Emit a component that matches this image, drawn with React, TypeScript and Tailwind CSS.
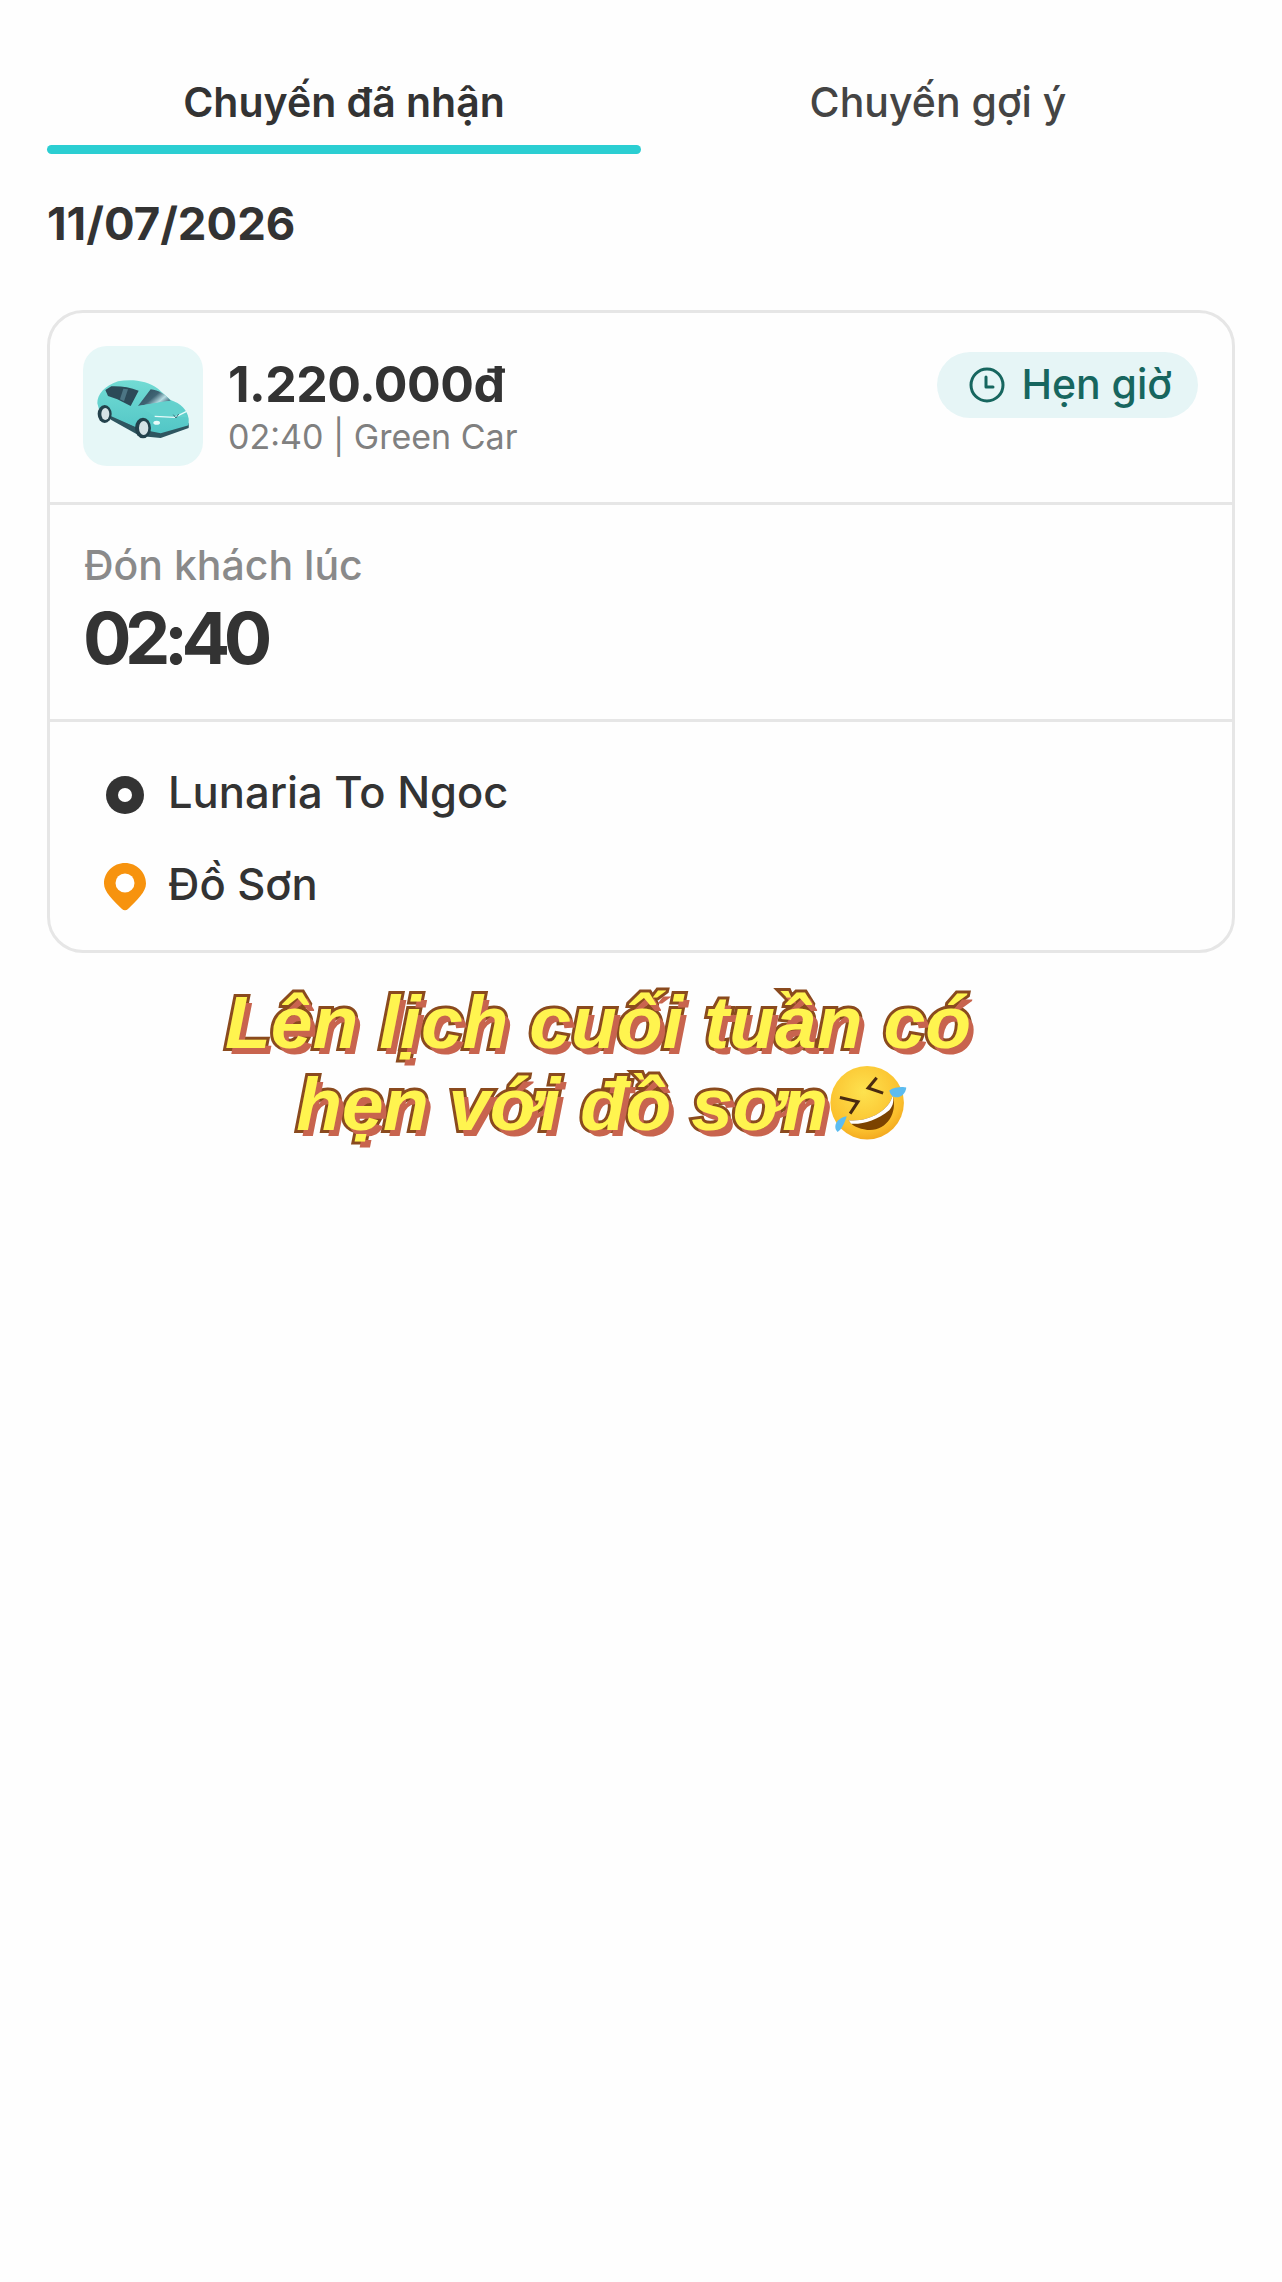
const font = "[font-family:Inter,'Noto_Sans',sans-serif]";

const CarIcon = () => (
  <svg viewBox="25 18 360 360" className="h-full w-full">
    <defs>
      <linearGradient id="carBody" x1="0" y1="0" x2="0" y2="1">
        <stop offset="0" stopColor="#72dbd4" />
        <stop offset="1" stopColor="#52c6c6" />
      </linearGradient>
      <linearGradient id="glass" x1="0" y1="0" x2="1" y2="0.6">
        <stop offset="0" stopColor="#2c4b5a" />
        <stop offset="0.55" stopColor="#3f6474" />
        <stop offset="0.8" stopColor="#b6dbe2" />
        <stop offset="1" stopColor="#4d7686" />
      </linearGradient>
    </defs>
    <path d="M78 216 L110 240 L196 288 L258 294 L342 264 L343 250 L258 276 L200 268 L110 226 Z" fill="#2e5660" />
    <path d="M68 190 C68 164 88 138 130 124 C170 116 220 122 250 146 L288 180 C318 190 338 210 342 236 L342 256 L258 280 L198 268 L108 228 L74 212 Z" fill="url(#carBody)" />
    <path d="M92 150 L110 139 C140 138 166 142 192 152 L168 198 L128 178 L100 168 Z" fill="#2c4a58" />
    <path d="M146 146 L160 148 L148 184 L136 178 Z" fill="#4c7584" />
    <path d="M190 198 L228 148 C252 150 272 164 288 182 C258 186 222 192 190 198 Z" fill="url(#glass)" />
    <path d="M190 198 L288 182 L340 232 L240 228 Z" fill="#62d1cd" />
    <ellipse cx="90" cy="222" rx="21" ry="27" fill="#23424c" />
    <ellipse cx="92" cy="222" rx="12" ry="18" fill="#d5e3e6" />
    <ellipse cx="205" cy="264" rx="24" ry="31" fill="#23424c" />
    <ellipse cx="207" cy="264" rx="14" ry="21" fill="#d5e3e6" />
    <path d="M240 229 L300 232 L336 214" fill="none" stroke="#e8fbfa" strokeWidth="4" />
    <path d="M296 224 L304 234 L312 222" fill="none" stroke="#35707a" strokeWidth="3" />
    <ellipse cx="246" cy="248" rx="10" ry="6" fill="#e8fbfa" />
  </svg>
);

const ClockIcon = () => (
  <svg viewBox="0 0 36 36" className="h-9 w-9 shrink-0" fill="none" stroke="#17665f" strokeWidth="3">
    <circle cx="18" cy="18" r="16" />
    <path d="M17 10 V20 H24" strokeLinecap="round" strokeLinejoin="round" />
  </svg>
);

const PinIcon = () => (
  <svg viewBox="0 0 42 48" className="mt-[3px] h-12 w-[42px]">
    <path d="M21 0 C32.6 0 42 9.2 42 20.5 C42 29 33 37 24 46 C22.4 47.6 19.6 47.6 18 46 C9 37 0 29 0 20.5 C0 9.2 9.4 0 21 0 Z" fill="#f7930e" />
    <circle cx="21" cy="20" r="9.5" fill="#ffffff" />
  </svg>
);

const LaughEmoji = () => (
  <svg viewBox="100 15 235 225" className="inline-block h-[77px] w-[80px] align-[-11px]">
    <defs>
      <radialGradient id="face" cx="0.45" cy="0.35" r="0.75">
        <stop offset="0" stopColor="#fde24f" />
        <stop offset="0.7" stopColor="#fbc02d" />
        <stop offset="1" stopColor="#ee9a17" />
      </radialGradient>
    </defs>
    <circle cx="215" cy="128" r="108" fill="url(#face)" />
    <path d="M160 180 C220 186 278 152 290 108 C306 160 270 214 215 208 C190 205 170 196 160 180 Z" fill="#7c4300" />
    <path d="M160 180 C220 186 278 152 290 108 C295 128 288 142 280 150 C245 178 205 192 168 190 Z" fill="#ffffff" />
    <path d="M243 55 L218 85 L262 100" fill="none" stroke="#4a2a10" strokeWidth="9" />
    <path d="M135 113 L188 125 L165 160" fill="none" stroke="#4a2a10" strokeWidth="9" />
    <path d="M280 92 C295 82 320 80 330 84 C328 100 315 114 298 112 C288 110 282 102 280 92 Z" fill="#5cbcf0" />
    <path d="M155 168 C150 185 138 210 128 214 C118 205 120 190 130 180 C138 172 146 170 155 168 Z" fill="#5cbcf0" />
  </svg>
);

export default function App() {
  return (
    <div className={`min-h-[2282px] w-[1282px] bg-[#fefefe] text-[#333333] ${font}`}>
      <div className="flex px-[47px] pt-[70px]">
        <div className="flex w-[594px] flex-col items-center">
          <div className="h-[64px] text-[41px] leading-[64px] font-semibold">Chuyến đã nhận</div>
          <div className="mt-[11px] h-[9px] w-full rounded-full bg-[#2bced2]" />
        </div>
        <div className="flex w-[594px] flex-col items-center">
          <div className="h-[64px] text-[41px] leading-[64px] font-medium text-[#444444]">Chuyến gợi ý</div>
        </div>
      </div>

      <div className="mt-[40px] px-[47px] text-[45.5px] leading-[60px] font-bold">11/07/2026</div>

      <div className="mx-[47px] mt-[56px] h-[643px] rounded-[36px] border-[3px] border-[#e6e6e6]">
        <div className="flex h-[192px] border-b-[3px] border-[#e6e6e6] pt-[33px] pr-[34px] pl-[33px]">
          <div className="h-[120px] w-[120px] rounded-[24px] bg-[#e6f7f7]">
            <CarIcon />
          </div>
          <div className="ml-[25px] flex flex-col">
            <div className="mt-[8px] text-[50px] leading-[60px] font-bold tracking-[-0.5px]">1.220.000đ</div>
            <div className="mt-[3px] text-[34px] leading-[40px] text-[#808080]">02:40 | Green Car</div>
          </div>
          <div className="mt-[6px] ml-auto flex h-[66px] items-center gap-[16px] rounded-full bg-[#e6f5f6] pr-[26px] pl-[32px] text-[41px] font-medium text-[#17665f]">
            <ClockIcon />
            Hẹn giờ
          </div>
        </div>

        <div className="h-[217px] border-b-[3px] border-[#e6e6e6] pt-[37px] pl-[34px]">
          <div className="text-[41px] leading-[46px] font-medium text-[#8a8a8a]">Đón khách lúc</div>
          <div className="mt-[10px] -ml-[1px] text-[72px] leading-[80px] font-bold tracking-[-6.5px]">02:40</div>
        </div>

        <div className="flex flex-col gap-[28px] pt-[39px] pl-[54px] text-[43.5px] font-medium">
          <div className="flex h-[64px] items-center">
            <div className="mt-[3px] flex h-[38px] w-[42px] items-center justify-center">
              <div className="flex h-[38px] w-[38px] items-center justify-center rounded-full bg-[#333333]">
                <div className="h-[14px] w-[14px] rounded-full bg-white" />
              </div>
            </div>
            <span className="ml-[22px]">Lunaria To Ngoc</span>
          </div>
          <div className="flex h-[64px] items-center">
            <PinIcon />
            <span className="ml-[22px]">Đồ Sơn</span>
          </div>
        </div>
      </div>

      <div className="mt-[28px] ml-[98px] w-[1000px] text-center text-[75px] leading-[82px] font-bold text-[#fff44f] italic [font-family:'Liberation_Sans',Arial,sans-serif] [paint-order:stroke_fill] [-webkit-text-stroke:6px_#8a4a1e] [text-shadow:5px_6px_0_#c8644e]">
        <div>Lên lịch cuối tuần có</div>
        <div className="pl-[8px] tracking-[-0.5px]">
          hẹn với đồ sơn
          <LaughEmoji />
        </div>
      </div>
    </div>
  );
}
